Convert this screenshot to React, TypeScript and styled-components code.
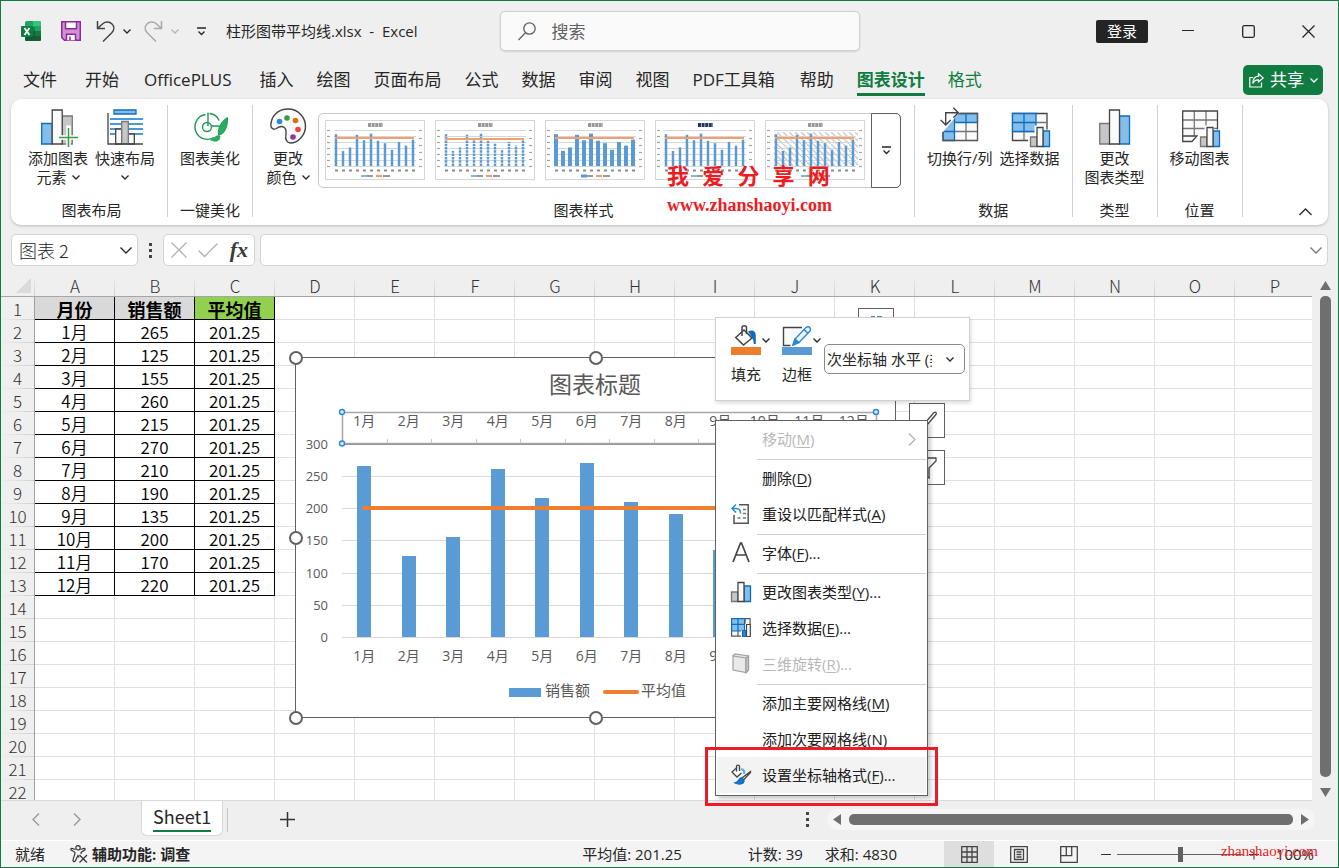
import React from "react";
import styled, { createGlobalStyle, css } from "styled-components";

const GREEN = "#107c41";
const INK = "#262626";
const UI = '"Open Sans", "Noto Sans CJK SC", sans-serif';
const CJK = '"Noto Sans CJK SC", sans-serif';

const Global = createGlobalStyle`
  *, *::before, *::after { box-sizing: border-box; }
  body { margin: 0; font-family: ${UI}; color: ${INK}; background: #efefef; }
  button, input, select { font: inherit; color: inherit; margin: 0; }
  button { background: none; border: 0; padding: 0; cursor: pointer; }
  svg { display: block; flex: none; overflow: visible; }
`;

const Window = styled.div`
  display: flex;
  flex-direction: column;
  height: 100vh;
  min-height: 600px;
  overflow: hidden;
  border: 1px solid ${GREEN};
  background: #efefef;
`;

/* ---------- title bar ---------- */

const TitleBar = styled.header`
  display: flex;
  align-items: center;
  height: 60px;
  flex: none;
`;

const TitleLeft = styled.div`
  flex: 1;
  display: flex;
  align-items: center;
  padding-left: 20px;
`;

const QuickButton = styled.button<{ $gap: number }>`
  display: flex;
  align-items: center;
  justify-content: center;
  margin-right: ${(p) => p.$gap}px;
`;

const FileName = styled.span`
  font-size: 15px;
  line-height: 20px;
  white-space: pre;
`;

const SearchBox = styled.label`
  display: flex;
  align-items: center;
  gap: 16px;
  width: 360px;
  height: 40px;
  padding-left: 17px;
  border: 1px solid #d0d0d0;
  border-radius: 5px;
  background: #fafafa;
  box-shadow: 0 1px 2px rgba(0, 0, 0, 0.12);
`;

const SearchInput = styled.input`
  flex: 1;
  min-width: 0;
  border: 0;
  outline: 0;
  padding: 0;
  background: transparent;
  font-size: 17px;
  &::placeholder {
    color: #616161;
    opacity: 1;
  }
`;

const TitleRight = styled.div`
  flex: 1;
  display: flex;
  align-items: center;
  justify-content: flex-end;
`;

const SignIn = styled.button`
  width: 52px;
  height: 23px;
  margin-right: 10px;
  border-radius: 2px;
  background: #242424;
  color: #fff;
  font-size: 15px;
  line-height: 23px;
`;

const CaptionButton = styled.button`
  width: 60px;
  height: 60px;
  display: flex;
  align-items: center;
  justify-content: center;
`;

/* ---------- ribbon tabs ---------- */

const TabRow = styled.nav`
  display: flex;
  align-items: center;
  height: 38px;
  flex: none;
  padding: 0 15px 0 22px;
`;

const Tab = styled.button<{ $tone?: "active" | "green"; $gap?: number }>`
  height: 32px;
  margin-right: ${(p) => p.$gap ?? 23}px;
  font-size: 17px;
  line-height: 32px;
  white-space: nowrap;
  ${(p) => p.$tone && css`color: ${GREEN};`}
  ${(p) =>
    p.$tone === "active" &&
    css`
      font-weight: 700;
      box-shadow: inset 0 -3px 0 ${GREEN};
    `}
`;

const ShareButton = styled.button`
  display: flex;
  align-items: center;
  gap: 6px;
  height: 30px;
  margin-left: auto;
  padding: 0 5px 0 6px;
  border-radius: 5px;
  background: ${GREEN};
  color: #fff;
  font-size: 17px;
  line-height: 30px;
  white-space: nowrap;
`;

/* ---------- ribbon ---------- */

const Ribbon = styled.section`
  position: relative;
  display: flex;
  flex: none;
  height: 126px;
  margin: 0 10px;
  padding: 6px 0 0 5px;
  border-radius: 10px;
  background: #fff;
  box-shadow: 0 1px 3px rgba(0, 0, 0, 0.22);
`;

const Group = styled.div`
  display: flex;
  flex-direction: column;
  justify-content: space-between;
  height: 114px;
`;

const Separator = styled.div`
  width: 1px;
  height: 112px;
  background: #d1d1d1;
`;

const GroupBody = styled.div<{ $wide?: boolean }>`
  display: flex;
  gap: ${(p) => (p.$wide ? 0 : 7)}px;
  padding: ${(p) => (p.$wide ? "0 13px 0 5px" : "0 12px")};
`;

const GroupLabel = styled.div`
  font-size: 15px;
  line-height: 18px;
  text-align: center;
`;

const BigButton = styled.button`
  display: flex;
  flex-direction: column;
  align-items: center;
  min-width: 60px;
  padding-top: 3px;
  font-size: 15px;
  line-height: 19px;
  white-space: nowrap;
`;

const BigIcon = styled.span`
  display: flex;
  height: 41px;
`;

const ButtonLine = styled.span`
  display: flex;
  align-items: center;
  gap: 5px;
  height: 19px;
`;

const Gallery = styled.div`
  display: flex;
  height: 75px;
  margin-top: 8px;
  border: 1px solid #c8c8c8;
  border-radius: 5px;
`;

const Thumbs = styled.div`
  display: flex;
  gap: 10px;
  height: 73px;
  padding: 6px 7px 0 6px;
`;

const ThumbButton = styled.button`
  display: block;
  height: 60px;
`;

const GalleryMore = styled.button`
  display: flex;
  align-items: center;
  justify-content: center;
  width: 30px;
  margin: -1px;
  border: 1px solid #616161;
  border-radius: 0 5px 5px 0;
`;

const Collapse = styled.button`
  margin: auto 16px 9px auto;
`;

const Stamp = styled.div`
  position: absolute;
  left: 656px;
  top: 64px;
  color: #ed1c24;
  font-weight: 700;
  white-space: nowrap;
  pointer-events: none;
`;

const StampName = styled.div`
  font-family: "Liberation Mono", ${CJK};
  font-size: 22px;
  line-height: 32px;
`;

const StampUrl = styled.div`
  font-family: "Liberation Serif", serif;
  font-size: 18px;
  line-height: 20px;
`;

/* ---------- formula bar ---------- */

const FormulaRow = styled.div`
  display: flex;
  align-items: center;
  flex: none;
  height: 50px;
  padding: 0 10px;
`;

const Field = styled.div`
  display: flex;
  align-items: center;
  height: 32px;
  border: 1px solid #d4d4d4;
  border-radius: 5px;
  background: #fff;
`;

const NameField = styled(Field)`
  width: 127px;
  padding: 0 5px 0 7px;
`;

const EditField = styled(Field)`
  width: 92px;
  justify-content: space-between;
  padding: 0 6px 0 7px;
`;

const FxLabel = styled.button`
  font-family: "Liberation Serif", serif;
  font-size: 22px;
  font-style: italic;
  font-weight: 700;
  line-height: 28px;
  color: #3b3b3b;
`;

const FormulaField = styled(Field)`
  flex: 1;
  margin-left: 5px;
  padding: 0 5px 0 8px;
`;

const PlainInput = styled.input`
  flex: 1;
  min-width: 0;
  height: 28px;
  padding: 0;
  border: 0;
  outline: 0;
  background: transparent;
  font-family: ${CJK};
  font-size: 18px;
  font-weight: 300;
`;

const Dots = styled.span`
  display: flex;
  flex-direction: column;
  gap: 3px;
  margin: 0 11px;
  i {
    width: 3px;
    height: 3px;
    background: #444;
  }
`;

/* ---------- sheet ---------- */

const SheetArea = styled.main`
  position: relative;
  display: flex;
  flex: 1;
  min-height: 0;
`;

const Viewport = styled.div`
  flex: 1;
  min-width: 0;
  overflow: hidden;
  background: #fff;
  border-bottom: 1px solid #d9d9d9;
`;

const Grid = styled.table`
  table-layout: fixed;
  width: 1314px;
  border-collapse: separate;
  border-spacing: 0;
  font-family: ${CJK};
  font-weight: 350;
  font-size: 17px;
  line-height: 22px;
  text-align: center;
  th, td { padding: 0; white-space: nowrap; }
  td { padding-top: 2px; line-height: 20px; }
`;

const ColHead = styled.th<{ $w: number }>`
  width: ${(p) => p.$w}px;
  height: 22px;
  font-weight: 300;
  line-height: 21px;
  color: #333;
  border-bottom: 1px solid #a6a6a6;
  background: linear-gradient(#efefef, #cfcfcf) right / 1px 100% no-repeat #efefef;
`;

const CornerIcon = styled.svg`
  margin-left: 15px;
`;

const RowHead = styled.th`
  height: 23px;
  font-weight: 300;
  font-size: 17px;
  color: #333;
  border-right: 1px solid #9f9f9f;
  background: linear-gradient(to right, #efefef, #cfcfcf) bottom / 100% 1px no-repeat #efefef;
`;

const Cell = styled.td<{ $ink?: boolean; $fill?: string }>`
  height: 23px;
  color: #000;
  border-right: 1px solid ${(p) => (p.$ink ? "#000" : "#e0e0e0")};
  border-bottom: 1px solid ${(p) => (p.$ink ? "#000" : "#e0e0e0")};
  ${(p) =>
    p.$fill &&
    css`
      background: ${p.$fill};
      font-weight: 700;
      font-size: 18px;
    `}
`;

const VScroll = styled.div`
  display: flex;
  flex-direction: column;
  align-items: center;
  gap: 5px;
  width: 26px;
  padding: 5px 0 3px;
`;

const Thumb = styled.div<{ $dir: "v" | "h" }>`
  flex: 1;
  border-radius: 5px;
  background: #6f6f6f;
  ${(p) => (p.$dir === "v" ? "width: 11px; margin-bottom: 5px;" : "height: 11px;")}
`;

const FloatingChart = styled.svg`
  position: absolute;
  left: 287px;
  top: 75px;
  font-family: ${UI};
  fill: #595959;
`;

const SideButton = styled.button<{ $x: number; $y: number }>`
  position: absolute;
  left: ${(p) => p.$x}px;
  top: ${(p) => p.$y}px;
  width: 36px;
  height: 35px;
  display: flex;
  align-items: center;
  justify-content: center;
  border: 1px solid #616161;
  background: #fff;
`;

const MiniBar = styled.div`
  position: absolute;
  left: 714px;
  top: 42px;
  display: flex;
  width: 255px;
  height: 84px;
  padding: 7px 4px 0 15px;
  border: 1px solid #d1d1d1;
  background: #fff;
  box-shadow: 1px 2px 4px rgba(0, 0, 0, 0.15);
`;

const MiniButton = styled.button`
  display: flex;
  flex-direction: column;
  gap: 9px;
  width: 51px;
  height: 62px;
  font-size: 15px;
  line-height: 20px;
  text-align: left;
`;

const MiniIconRow = styled.span`
  display: flex;
  align-items: center;
  gap: 1px;
`;

const ElementPicker = styled.div`
  position: relative;
  flex: none;
  width: 141px;
  height: 30px;
  margin: 19px 0 0 -9px;
  svg {
    position: absolute;
    right: 11px;
    top: 13px;
    pointer-events: none;
  }
`;

const Select = styled.select`
  appearance: none;
  width: 100%;
  height: 100%;
  padding: 0 32px 0 2px;
  border: 1px solid #8a8a8a;
  border-radius: 5px;
  background: #fff;
  font-size: 15px;
`;

const Menu = styled.div`
  position: absolute;
  left: 714px;
  top: 145px;
  width: 213px;
  padding: 0 1px 2px;
  border: 1px solid #616161;
  background: #fff;
  box-shadow: 3px 3px 4px rgba(0, 0, 0, 0.2);
`;

const MenuItem = styled.button<{ $off?: boolean; $hot?: boolean }>`
  display: flex;
  align-items: center;
  gap: 11px;
  width: 100%;
  height: 36px;
  padding: 0 10px 0 14px;
  font-size: 15px;
  line-height: 36px;
  white-space: nowrap;
  color: ${(p) => (p.$off ? "#b8b8b8" : "#202020")};
  background: ${(p) => (p.$hot ? "#f3f3f3" : "transparent")};
  u { text-underline-offset: 2px; }
`;

const MenuIcon = styled.span`
  width: 20px;
  height: 20px;
  flex: none;
`;

const SubArrow = styled.span`
  margin-left: auto;
`;

const MenuRule = styled.div`
  height: 1px;
  margin: 2px 0 0 40px;
  background: #cfcfcf;
`;

const Callout = styled.div`
  position: absolute;
  left: 704px;
  top: 472px;
  width: 233px;
  height: 59px;
  border: 3px solid #ed1c24;
  pointer-events: none;
`;

/* ---------- sheet tabs and status bar ---------- */

const SheetTabs = styled.div`
  display: flex;
  align-items: flex-start;
  flex: none;
  height: 39px;
  padding: 0 23px 0 31px;
`;

const TabsCell = styled.span<{ $right: number }>`
  display: flex;
  align-items: center;
  height: 36px;
  margin-right: ${(p) => p.$right}px;
`;

const SheetTab = styled.button`
  height: 36px;
  padding: 0 11px;
  margin-top: -1px;
  border: 1px solid #d9d9d9;
  border-top: 0;
  border-radius: 0 0 6px 6px;
  background: #fff;
`;

const SheetName = styled.span`
  display: block;
  height: 29px;
  border-bottom: 2px solid ${GREEN};
  font-family: ${CJK};
  font-size: 18px;
  line-height: 26px;
`;

const TabDivider = styled.span`
  width: 1px;
  height: 24px;
  margin: 7px 52px 0 4px;
  background: #c6c6c6;
`;

const HScroll = styled.div`
  display: flex;
  align-items: center;
  gap: 7px;
  width: 488px;
  height: 21px;
  margin-top: 8px;
  padding: 0 6px;
  border-radius: 10px;
  background: #f5f5f5;
`;

const Spacer = styled.span`
  flex: 1;
`;

const StatusBar = styled.footer`
  display: flex;
  align-items: center;
  flex: none;
  height: 27px;
  padding: 0 24px 0 14px;
  border-top: 1px solid #fff;
  background: #f4f4f4;
  font-size: 15px;
  line-height: 26px;
  white-space: nowrap;
`;

const StatusText = styled.span<{ $right: number }>`
  margin-right: ${(p) => p.$right}px;
`;

const AccessButton = styled.button`
  display: flex;
  align-items: center;
  gap: 4px;
  font-weight: 700;
`;

const ViewButton = styled.button<{ $on?: boolean }>`
  display: flex;
  align-items: center;
  justify-content: center;
  width: 50px;
  height: 26px;
  background: ${(p) => (p.$on ? "#dedede" : "transparent")};
`;

const ZoomSlider = styled.input`
  appearance: none;
  width: 126px;
  height: 16px;
  margin: 0 5px;
  background: linear-gradient(#616161, #616161) center / 100% 1px no-repeat;
  &::-webkit-slider-thumb {
    appearance: none;
    width: 5px;
    height: 15px;
    background: #616161;
  }
`;

const ZoomStep = styled.button`
  display: flex;
  align-items: center;
  justify-content: center;
  width: 12px;
  height: 20px;
`;

const ZoomGroup = styled.div`
  position: relative;
  display: flex;
  align-items: center;
  padding-left: 6px;
`;

const ZoomValue = styled.span`
  width: 54px;
  text-align: right;
`;

const StampSmall = styled.span`
  position: absolute;
  right: -4px;
  top: -3px;
  color: #ed1c24;
  font-family: "Liberation Serif", serif;
  font-size: 15px;
  line-height: 26px;
  pointer-events: none;
`;

/* ---------- icons ---------- */

const Chevron = ({ w = 8, color = INK, sw = 1.3 }: { w?: number; color?: string; sw?: number }) => (
  <svg width={w} height={w / 2 + 1} viewBox={`0 0 ${w} ${w / 2 + 1}`} fill="none" stroke={color} strokeWidth={sw}>
    <path d={`M.5 .5 L${w / 2} ${w / 2} L${w - 0.5} .5`} />
  </svg>
);

const ExcelIcon = () => (
  <svg width="20" height="20" viewBox="0 0 20 20">
    <rect x="4" y="0" width="16" height="20" rx="1.5" fill="#21a366" />
    <path d="M12 0h6.500a1.500 1.500 0 0 1 1.500 1.500V5h-8z" fill="#33c481" />
    <path d="M4 10h8v5H4z" fill="#107c41" />
    <path d="M12 10h8v5h-8z" fill="#107c41" />
    <path d="M4 15h16v3.500a1.500 1.500 0 0 1-1.500 1.500h-13A1.500 1.500 0 0 1 4 18.500z" fill="#185c37" />
    <path d="M5 6h9v11H5z" fill="#0b4f2a" opacity=".45" />
    <rect x="0" y="5" width="12" height="11" rx="1" fill="#107c41" />
    <path d="M3.500 7 8.500 14M8.500 7 3.500 14" stroke="#fff" strokeWidth="1.800" />
  </svg>
);

const SaveIcon = () => (
  <svg width="20" height="20" viewBox="0 0 20 20" fill="#d48fdc" stroke="#8a2b93" strokeWidth="1.500">
    <path d="M.75.75h18.500v18.500H3.500L.75 16.500z" />
    <path d="M4.500.75h11v7h-11z" fill="#fff" />
    <path d="M5.500 19.250v-6h9v6M9 19v-3.500" fill="#fff" />
  </svg>
);

const Undo = ({ flip }: { flip?: boolean }) => (
  <svg width="19" height="21" viewBox="0 0 19 21" fill="none" stroke={flip ? "#a8a8a8" : "#444"} strokeWidth="1.500">
    <path
      transform={flip ? "translate(19 0) scale(-1 1)" : undefined}
      d="M1.500 0V7.500H9M1.500 7.500 7 2.500c2.500-2 6.500-2 9 .5s2.300 6 0 8.500L7 20.500"
    />
  </svg>
);

const CustomizeIcon = () => (
  <svg width="9" height="9" viewBox="0 0 9 9" fill="none" stroke={INK} strokeWidth="1.300">
    <path d="M0 1h9M1.500 4.500 4.500 7.500 7.500 4.500" />
  </svg>
);

const Magnifier = () => (
  <svg width="18" height="19" viewBox="0 0 18 19" fill="none" stroke="#616161" strokeWidth="1.300">
    <circle cx="11.500" cy="6.500" r="5.700" />
    <path d="M7.500 10.800.5 18" />
  </svg>
);

const ShareIcon = () => (
  <svg width="15" height="15" viewBox="0 0 15 15" fill="none" stroke="#fff" strokeWidth="1.200">
    <path d="M4 4.500H.8V14h11.700V9.500" />
    <path d="M9.500.8 14.200 5 9.500 9V6.800C6.500 6.600 5 8 3.800 10.500 3.800 6.500 6 3.500 9.500 3.200z" />
  </svg>
);

const AddElementIcon = () => (
  <svg width="36" height="38" viewBox="0 0 36 38" strokeWidth="1.300">
    <path d="M1.700 15.500h10.500v20.500H1.700z" fill="#83beec" stroke="#0f6cbd" />
    <path d="M22.300 8h10v28h-10z" fill="#c8c6c4" stroke="#797775" />
    <path d="M12.200 2h10v34h-10z" fill="#fafafa" stroke="#444" />
    <path d="M28.500 17.500V39M17.500 29.500H39" stroke="#fff" strokeWidth="4.500" />
    <path d="M28.500 20v19M19 29.500h19" stroke="#2ea043" strokeWidth="1.500" />
  </svg>
);

const QuickLayoutIcon = () => (
  <svg width="36" height="38" viewBox="0 0 36 38" strokeWidth="1.300">
    <path d="M3 11h33M3 16h33M3 21h33M3 26h33" stroke="#0f78c8" />
    <path d="M7 2h22v4H7z" fill="#83beec" stroke="#0f6cbd" />
    <path d="M8.700 21h6v15h-6zM21.300 26h6v10h-6z" fill="#fafafa" stroke="#444" />
    <path d="M14.700 13.500h6.600V36h-6.600z" fill="#c8c6c4" stroke="#797775" />
    <path d="M1 5v31h35" fill="none" stroke="#444" />
  </svg>
);

const BeautifyIcon = () => (
  <svg width="34" height="34" viewBox="0 0 34 34" fill="none" stroke="#219653" strokeWidth="1.400">
    <path d="M12.500 6.500A12.500 12.500 0 1 0 21 29.500" />
    <path d="M15 4.500V18M18 18h8.500" />
    <path d="M16.500 5.500C21 6 24.500 8.500 26 12.500" />
    <circle cx="14" cy="19" r="4.500" />
    <path d="M34.500 9.500C28 13.500 24.500 20 25.500 27c5.500 0 9.500-8 9-17.500z" fill="#27ae60" strokeWidth="1" />
    <path d="M25 27.500c-3 0-4 4-7.500 4.500 4.500 2.500 10 1.500 9.500-4z" fill="#27ae60" strokeWidth=".5" />
  </svg>
);

const PaletteIcon = () => (
  <svg width="36" height="36" viewBox="0 0 36 36">
    <path
      d="M18 1C8 1 1 8 .8 17.500c0 3 3 4.500 5.500 3 3-2 6-2.500 8-1 2.500 2 2 4.500 1.500 8-.6 4 1 7 4.500 7.500C28 35 35.500 27 35.500 18.500 35.500 9 28 1 18 1z"
      fill="#fafafa"
      stroke="#444"
      strokeWidth="1.400"
    />
    <circle cx="9.500" cy="13.500" r="2.800" fill="#2b88d8" />
    <circle cx="17" cy="10" r="2.800" fill="#3c9a40" />
    <circle cx="25.500" cy="12.500" r="2.800" fill="#e07000" />
    <circle cx="28" cy="21.500" r="2.800" fill="#f04040" />
    <circle cx="23" cy="29" r="2.800" fill="#8e35a0" />
  </svg>
);

const MiniBars = () => (
  <g strokeWidth="1.300">
    <path d="M.5 10H7v9.500H.5z" fill="#c8c6c4" stroke="#797775" />
    <path d="M13 4h6.500v15.500H13z" fill="#83beec" stroke="#0f6cbd" />
    <path d="M7 .5h6v19H7z" fill="#fafafa" stroke="#444" />
  </g>
);

const SwitchIcon = () => (
  <svg width="38" height="36" viewBox="0 0 38 36" fill="none" strokeWidth="1.300">
    <path d="M2 5.500h34.500v27H2z" fill="#fafafa" />
    <path d="M2 5.500h34.500v9H13.500v18H2z" fill="#83beec" />
    <path d="M13.500 23.500h23M25 14.500v18" stroke="#797775" />
    <path d="M13.500 5.500h23v9h-23zM2 14.500v18h11.500v-18M25 5.500v9M2 23.500h11.500" stroke="#0f6cbd" />
    <path d="M2 5.500h34.500v27H2z" stroke="#555" />
    <path d="M-2-2h26L2 24h-4z" fill="#fff" />
    <path d="M4.700 17V4.700h12.600M-.3 12l5 5 5-5M12.300-.3l5 5-5 5" stroke="#444" strokeWidth="1.400" />
  </svg>
);

const SelectDataIcon = () => (
  <svg width="38" height="36" viewBox="0 0 38 36" fill="none" strokeWidth="1.300">
    <path d="M1.500 5.500h34.500v27H1.500z" fill="#fafafa" stroke="#444" />
    <path d="M13 23.500v9M1.500 23.500H36M25 14.500h11" stroke="#797775" />
    <path d="M1.500 5.500H25v18H1.500z" fill="#83beec" stroke="#0f6cbd" />
    <path d="M13 5.500v18M1.500 14.500H25" stroke="#0f6cbd" />
    <path d="M17 27h6.500v-9.500H33v4h6V40H17z" fill="#fff" />
    <g transform="translate(19 19)">
      <MiniBars />
    </g>
  </svg>
);

const BarsIcon = () => (
  <svg width="31" height="37" viewBox="0 0 31 37" strokeWidth="1.300">
    <path d="M.7 15.500h10V36H.7z" fill="#c8c6c4" stroke="#797775" />
    <path d="M20.500 8h10v28h-10z" fill="#83beec" stroke="#0f6cbd" />
    <path d="M10.500 2h10v34h-10z" fill="#fafafa" stroke="#444" />
  </svg>
);

const MoveChartIcon = () => (
  <svg width="38" height="38" viewBox="0 0 38 38" fill="none" strokeWidth="1.300">
    <path d="M1.700 3h34.800v25H16l-5 5.500H1.700z" fill="#fafafa" />
    <path d="M13.300 3v25M25 3v25M1.700 12h34.800M1.700 20.500h34.800" stroke="#797775" />
    <path d="M36.500 28V3H1.700v30.500H11l5-5.500H1.700" stroke="#444" />
    <path d="M17 27h6.500v-9.500H33v4h6V40H17z" fill="#fff" />
    <g transform="translate(19 19)">
      <MiniBars />
    </g>
  </svg>
);

const FillIcon = () => (
  <svg width="30" height="30" viewBox="0 0 30 30" fill="none" strokeWidth="1.500">
    <path d="M4.700 12.500 13 5l8 8-8.500 7z" fill="#fafafa" stroke="#444" />
    <path d="M11 11V2.500C11 0 15.500 0 15.500 2.500V9" stroke="#444" />
    <path d="M17 6.500c4.500-2.500 7.500-.5 7.800 3.500v9h-2C22.500 14 21 12 17 6.500z" fill="#0f6cbd" />
    <rect x="0" y="22" width="30" height="8" fill="#ed7d31" />
  </svg>
);

const OutlineIcon = () => (
  <svg width="30" height="30" viewBox="0 0 30 30" fill="none" strokeWidth="1.400">
    <path d="M20 2.500H1.500v18h7" fill="#fafafa" stroke="#444" />
    <path d="M11 20l2-6L24 2.500c3-2 5.500.5 4 3.500L17 17.500z" fill="#e9f4fc" stroke="#2b88d8" />
    <path d="M13 14l4 3.500-6 2.500zM22 4.500l4 4" fill="#2b88d8" stroke="#2b88d8" />
    <rect x="0" y="22" width="30" height="8" fill="#5b9bd5" />
  </svg>
);

const ResetIcon = () => (
  <svg width="20" height="20" viewBox="0 0 20 20" fill="none">
    <path d="M8 .8h9.200v18.400H3V11" stroke="#555" strokeWidth="1.500" />
    <path d="M12 5.500h3M12 9.500h3M6.500 14h3M12 14h3" stroke="#777" strokeWidth="1.500" />
    <path d="M5 .5 1 4.500l4 4M1 4.500h4c3.500 0 4.500 2 4.500 5" stroke="#2b88d8" strokeWidth="1.500" />
  </svg>
);

const FontIcon = () => (
  <svg width="20" height="20" viewBox="0 0 20 20" fill="none" stroke="#444" strokeWidth="1.700">
    <path d="M2 19 9.500 0h1L18 19M5 12h10" />
  </svg>
);

const MenuBarsIcon = () => (
  <svg width="20" height="20" viewBox="0 0 20 20">
    <MiniBars />
  </svg>
);

const MenuDataIcon = () => (
  <svg width="20" height="20" viewBox="0 0 20 20" fill="none" strokeWidth="1.200">
    <path d="M.6.6h18.500v17.500H.6z" fill="#fafafa" stroke="#555" />
    <path d="M.6.6h13v12.400H.6z" fill="#83beec" stroke="#0f6cbd" />
    <path d="M7 .6v12.400M.6 6.300h13" stroke="#0f6cbd" />
    <path d="M7 13v5M14 .6v5" stroke="#555" />
    <path d="M10 19.500v-7h4V6h6v13.500z" fill="#fff" />
    <path d="M11.500 12.500H15V18.500h-3.500z" fill="#2b88d8" stroke="#0f6cbd" />
    <path d="M15.500 6.500h3.800v12h-3.800z" fill="#fafafa" stroke="#444" />
  </svg>
);

const RotateIcon = () => (
  <svg width="20" height="20" viewBox="0 0 20 20" fill="#e9e9e9" stroke="#a0a0a0" strokeWidth="1.200">
    <path d="M2 2 4 0l13.500 2v14l-2.500 2.500" />
    <path d="M2 2l13 2v14.500L2 16z" />
    <path d="M15 4l2.500-2v14L15 18.500z" fill="#c8c8c8" />
  </svg>
);

const FormatIcon = () => (
  <svg width="20" height="20" viewBox="0 0 20 20" fill="none" strokeWidth="1.300">
    <path d="M10.500 8 6 12 1 7 6 2.500" stroke="#444" fill="#fafafa" />
    <path d="M5.500 6.500V1.500c0-1.800 3-1.800 3 0v4.500" stroke="#444" />
    <path d="M10 4.500c2.500-.5 3.500 1.500 3.200 4.500" stroke="#5ab0e8" strokeWidth="2.200" />
    <path d="M19.500 6.500 11 13l1.500 2L19.500 7.500z" stroke="#444" fill="#fafafa" />
    <path d="M10.500 13c-3 0-2.500 4-6.500 5 3.500 1.800 9 1.500 9-2.500z" fill="#0f78d4" stroke="#0f6cbd" />
  </svg>
);

const AccessIcon = () => (
  <svg width="18" height="18" viewBox="0 0 18 18" fill="none" stroke="#333" strokeWidth="1.200">
    <circle cx="8" cy="2.800" r="2.200" />
    <path d="M5.500 4.500C3.500 4 1 2.500.8 4.200.6 5.800 4.500 6 5 7.500c.3 2-2.200 6-2 8 .3 2 2.200 1 2.800-.5L8 10.500l1.200 2M10.500 4.500c2-.5 4.500-2 4.700-.3.200 1.600-3.700 2-4.200 3.300l.2 1.500" />
    <path d="M9.500 10l7.500 7.500M17 10l-7.500 7.500" />
  </svg>
);

const Triangle = ({ dir }: { dir: "up" | "down" | "left" | "right" }) => {
  const d = {
    up: "M5.500 1 11 10H0z",
    down: "M0 1h11L5.500 10z",
    left: "M0 5.500 8 0v11z",
    right: "M9 5.500 1 0v11z",
  }[dir];
  const w = dir === "left" || dir === "right" ? 9 : 11;
  return (
    <svg width={w} height="11" viewBox={`0 0 ${w} 11`}>
      <path d={d} fill="#6f6f6f" />
    </svg>
  );
};

/* ---------- data ---------- */

const SALES = [265, 125, 155, 260, 215, 270, 210, 190, 135, 200, 170, 220];
const AVG = 201.25;
const COLS = "ABCDEFGHIJKLMNOP".split("");
const ROWS = Array.from({ length: 22 }, (_, i) => i + 1);
const FILLS = ["#d9d9d9", "#d9d9d9", "#92d050"];

const cellText = (row: number, col: number): string => {
  if (row === 1) return ["月份", "销售额", "平均值"][col] ?? "";
  if (row > 13) return "";
  return [`${row - 1}月`, String(SALES[row - 2]), AVG.toFixed(2)][col] ?? "";
};

const ThumbChart = ({ kind }: { kind: number }) => {
  const barW = [2.5, 2.5, 4, 2.5, 2.5][kind];
  const lineY = kind === 1 ? 19 : 18;
  return (
    <svg width="100" height="60" viewBox="0 0 100 60">
      <defs>
        <pattern id="hatch" width="6" height="6" patternUnits="userSpaceOnUse">
          <path d="M0 0l6 6" stroke="#cdcdcd" strokeWidth="1.500" />
        </pattern>
      </defs>
      <rect x=".5" y=".5" width="99" height="59" fill="#fff" stroke="#d6d6d6" />
      {kind === 4 && <rect x="9" y="12" width="84" height="35" fill="url(#hatch)" />}
      {[10, 16, 22, 28, 34, 40, 46].map((y) => (
        <path key={y} d={`M9 ${y}.5h82`} stroke="#d3d6dc" />
      ))}
      {[10, 16, 22, 28, 34, 40, 46].map((y) => (
        <path key={y} d={`M2 ${y}.500h3`} stroke="#a5a5a5" strokeWidth="1.200" />
      ))}
      {[10, 18, 25, 32, 39, 46].map((y) => (
        <path key={y} d={`M94 ${y}.500h3`} stroke="#a5a5a5" strokeWidth="1.200" />
      ))}
      {SALES.map((v, i) => (
        <path
          key={i}
          d={`M${11 + i * 7} 46v${-v * 0.12}`}
          stroke="#5b9bd5"
          strokeWidth={barW}
          strokeDasharray={kind === 1 ? "2.500 .8" : undefined}
        />
      ))}
      <path d={`M10 ${lineY}h79`} stroke="#f2a16e" strokeWidth="2.200" />
      <path d="M10 50.500h80" stroke="#8c8c8c" strokeWidth="2" strokeDasharray="3 4" />
      <path d="M43 5h15" stroke={kind === 3 ? "#1f3864" : "#999"} strokeWidth="4" strokeDasharray="3 .6" />
      <path d="M36 56h6" stroke="#5b9bd5" strokeWidth={kind === 2 ? 3 : 1.5} />
      <path d="M51 56h6" stroke="#ed7d31" strokeWidth="1.500" />
      <path d="M42 56h6M58 56h7" stroke="#999" strokeWidth="2" />
    </svg>
  );
};

const CHART = { left: 342, base: 637, unit: 0.645, step: 44.5 };

const Chart = () => (
  <FloatingChart width="616" height="376" viewBox="288 350 616 376" role="img" aria-label="图表标题">
    <rect x="295.500" y="357.500" width="600" height="360" fill="#fff" stroke="#616161" />
    <text x="595" y="393" fontSize="23" textAnchor="middle">图表标题</text>
    {[0, 50, 100, 150, 200, 250, 300].map((v) => {
      const y = Math.round(CHART.base - v * CHART.unit) + 0.5;
      return (
        <g key={v}>
          <path d={`M${CHART.left} ${y}h534`} stroke={v === 300 ? "#8f8f8f" : "#d9d9d9"} />
          <text x="328" y={y + 4} fontSize="13" textAnchor="end">{v}</text>
        </g>
      );
    })}
    <path d="M342.500 412.500h534v31h-534z" fill="none" stroke="#a6a6a6" strokeWidth="1.500" />
    {SALES.map((v, i) => {
      const x = CHART.left + CHART.step * (i + 0.5);
      const h = Math.round(v * CHART.unit);
      return (
        <g key={i}>
          {i > 0 && <path d={`M${Math.round(x - CHART.step / 2)}.500 439v4`} stroke="#c8c8c8" />}
          <rect x={Math.round(x) - 7} y={CHART.base - h} width="14" height={h} fill="#5b9bd5" />
          <text x={x} y="426" fontSize="14" textAnchor="middle">{`${i + 1}月`}</text>
          <text x={x} y="661" fontSize="14" textAnchor="middle">{`${i + 1}月`}</text>
        </g>
      );
    })}
    <path d="M364 508h490" stroke="#ed7d31" strokeWidth="4" strokeLinecap="round" />
    <rect x="509" y="688" width="32" height="9" fill="#5b9bd5" />
    <text x="545" y="696" fontSize="15">销售额</text>
    <path d="M605 692h32" stroke="#ed7d31" strokeWidth="4" strokeLinecap="round" />
    <text x="641" y="696" fontSize="15">平均值</text>
    {[[342, 412], [342, 443.5], [876, 412], [876, 443.5]].map(([x, y]) => (
      <circle key={`${x}-${y}`} cx={x} cy={y} r="2.500" fill="#d8ecfb" stroke="#2b88d8" strokeWidth="1.400" />
    ))}
    {[[296, 358], [596, 358], [296, 538], [296, 718], [596, 718]].map(([x, y]) => (
      <circle key={`${x}-${y}`} cx={x} cy={y} r="6" fill="#fff" stroke="#616161" strokeWidth="2" />
    ))}
  </FloatingChart>
);

type Entry = { text: string; mark: string; tail?: string; icon?: React.ReactNode; off?: boolean; hot?: boolean; sub?: boolean; rule?: boolean };

const ENTRIES: Entry[] = [
  { text: "移动", mark: "M", off: true, sub: true, rule: true },
  { text: "删除", mark: "D" },
  { text: "重设以匹配样式", mark: "A", icon: <ResetIcon />, rule: true },
  { text: "字体", mark: "F", tail: "...", icon: <FontIcon />, rule: true },
  { text: "更改图表类型", mark: "Y", tail: "...", icon: <MenuBarsIcon /> },
  { text: "选择数据", mark: "E", tail: "...", icon: <MenuDataIcon /> },
  { text: "三维旋转", mark: "R", tail: "...", icon: <RotateIcon />, off: true, rule: true },
  { text: "添加主要网格线", mark: "M" },
  { text: "添加次要网格线", mark: "N" },
  { text: "设置坐标轴格式", mark: "F", tail: "...", icon: <FormatIcon />, hot: true },
];

const TABS: { name: string; tone?: "active" | "green"; gap?: number }[] = [
  { name: "文件", gap: 28 },
  { name: "开始", gap: 25 },
  { name: "OfficePLUS", gap: 28 },
  { name: "插入" },
  { name: "绘图" },
  { name: "页面布局" },
  { name: "公式" },
  { name: "数据" },
  { name: "审阅" },
  { name: "视图" },
  { name: "PDF工具箱", gap: 25 },
  { name: "帮助" },
  { name: "图表设计", tone: "active" },
  { name: "格式", tone: "green" },
];

const Big = ({ icon, lines, drop }: { icon: React.ReactNode; lines: string[]; drop?: boolean }) => (
  <BigButton>
    <BigIcon>{icon}</BigIcon>
    {lines.map((line, i) => (
      <ButtonLine key={i}>
        {line}
        {drop && i === lines.length - 1 && <Chevron />}
      </ButtonLine>
    ))}
  </BigButton>
);

export default function App() {
  return (
    <Window>
      <Global />
      <TitleBar>
        <TitleLeft>
          <QuickButton $gap={20} aria-label="Excel"><ExcelIcon /></QuickButton>
          <QuickButton $gap={15} aria-label="保存"><SaveIcon /></QuickButton>
          <QuickButton $gap={8} aria-label="撤消"><Undo /></QuickButton>
          <QuickButton $gap={13} aria-label="撤消列表"><Chevron /></QuickButton>
          <QuickButton $gap={8} aria-label="恢复"><Undo flip /></QuickButton>
          <QuickButton $gap={18} aria-label="恢复列表"><Chevron color="#b5b5b5" /></QuickButton>
          <QuickButton $gap={20} aria-label="自定义快速访问工具栏"><CustomizeIcon /></QuickButton>
          <FileName>{"柱形图带平均线.xlsx  -  Excel"}</FileName>
        </TitleLeft>
        <SearchBox>
          <Magnifier />
          <SearchInput placeholder="搜索" aria-label="搜索" />
        </SearchBox>
        <TitleRight>
          <SignIn>登录</SignIn>
          <CaptionButton aria-label="最小化">
            <svg width="12" height="12" viewBox="0 0 12 12"><path d="M0 5.500h12" stroke={INK} /></svg>
          </CaptionButton>
          <CaptionButton aria-label="最大化">
            <svg width="13" height="13" viewBox="0 0 13 13"><rect x=".7" y=".7" width="11.600" height="11.600" rx="1.500" fill="none" stroke={INK} strokeWidth="1.300" /></svg>
          </CaptionButton>
          <CaptionButton aria-label="关闭">
            <svg width="13" height="13" viewBox="0 0 13 13"><path d="M.5.5l12 12M12.500.5l-12 12" stroke={INK} strokeWidth="1.300" /></svg>
          </CaptionButton>
        </TitleRight>
      </TitleBar>

      <TabRow>
        {TABS.map((t) => (
          <Tab key={t.name} $tone={t.tone} $gap={t.gap}>{t.name}</Tab>
        ))}
        <ShareButton>
          <ShareIcon />
          共享
          <Chevron color="#fff" />
        </ShareButton>
      </TabRow>

      <Ribbon>
        <Group>
          <GroupBody>
            <Big icon={<AddElementIcon />} lines={["添加图表", "元素"]} drop />
            <Big icon={<QuickLayoutIcon />} lines={["快速布局", ""]} drop />
          </GroupBody>
          <GroupLabel>图表布局</GroupLabel>
        </Group>
        <Separator />
        <Group>
          <GroupBody>
            <Big icon={<BeautifyIcon />} lines={["图表美化"]} />
          </GroupBody>
          <GroupLabel>一键美化</GroupLabel>
        </Group>
        <Separator />
        <Group>
          <GroupBody $wide>
            <Big icon={<PaletteIcon />} lines={["更改", "颜色"]} drop />
            <Gallery>
              <Thumbs>
                {[0, 1, 2, 3, 4].map((k) => (
                  <ThumbButton key={k} aria-label={`样式 ${k + 1}`}><ThumbChart kind={k} /></ThumbButton>
                ))}
              </Thumbs>
              <GalleryMore aria-label="其他样式"><CustomizeIcon /></GalleryMore>
            </Gallery>
          </GroupBody>
          <GroupLabel>图表样式</GroupLabel>
        </Group>
        <Separator />
        <Group>
          <GroupBody>
            <Big icon={<SwitchIcon />} lines={["切换行/列"]} />
            <Big icon={<SelectDataIcon />} lines={["选择数据"]} />
          </GroupBody>
          <GroupLabel>数据</GroupLabel>
        </Group>
        <Separator />
        <Group>
          <GroupBody>
            <Big icon={<BarsIcon />} lines={["更改", "图表类型"]} />
          </GroupBody>
          <GroupLabel>类型</GroupLabel>
        </Group>
        <Separator />
        <Group>
          <GroupBody>
            <Big icon={<MoveChartIcon />} lines={["移动图表"]} />
          </GroupBody>
          <GroupLabel>位置</GroupLabel>
        </Group>
        <Separator />
        <Collapse aria-label="折叠功能区">
          <svg width="13" height="8" viewBox="0 0 13 8"><path d="M.5 7l6-6 6 6" fill="none" stroke={INK} strokeWidth="1.300" /></svg>
        </Collapse>
        <Stamp>
          <StampName>我 爱 分 享 网</StampName>
          <StampUrl>www.zhanshaoyi.com</StampUrl>
        </Stamp>
      </Ribbon>

      <FormulaRow>
        <NameField>
          <PlainInput defaultValue="图表 2" aria-label="名称框" />
          <Chevron w={12} />
        </NameField>
        <Dots><i /><i /><i /></Dots>
        <EditField>
          <svg width="16" height="16" viewBox="0 0 16 16"><path d="M.5.5l15 15M15.500.5l-15 15" stroke="#b0b0b0" strokeWidth="1.300" /></svg>
          <svg width="20" height="14" viewBox="0 0 20 14"><path d="M.5 7.500l6 6L19.500.5" fill="none" stroke="#b0b0b0" strokeWidth="1.300" /></svg>
          <FxLabel>fx</FxLabel>
        </EditField>
        <FormulaField>
          <PlainInput aria-label="编辑栏" />
          <Chevron w={12} color="#777" />
        </FormulaField>
      </FormulaRow>

      <SheetArea>
        <Viewport>
          <Grid>
            <thead>
              <tr>
                <ColHead $w={34}>
                  <CornerIcon width="15" height="15" viewBox="0 0 15 15"><path d="M15 0v15H0z" fill="#dadada" /></CornerIcon>
                </ColHead>
                {COLS.map((c) => (
                  <ColHead key={c} $w={80}>{c}</ColHead>
                ))}
              </tr>
            </thead>
            <tbody>
              {ROWS.map((r) => (
                <tr key={r}>
                  <RowHead>{r}</RowHead>
                  {COLS.map((c, i) => (
                    <Cell key={c} $ink={r <= 13 && i < 3} $fill={r === 1 ? FILLS[i] : undefined}>{cellText(r, i)}</Cell>
                  ))}
                </tr>
              ))}
            </tbody>
          </Grid>
        </Viewport>
        <VScroll>
          <Triangle dir="up" />
          <Thumb $dir="v" />
          <Triangle dir="down" />
        </VScroll>

        <Chart />
        <SideButton $x={857} $y={33} aria-label="图表元素">
          <svg width="22" height="22" viewBox="0 0 22 22"><path d="M6 2h4M12 2h5" stroke="#0f6cbd" strokeWidth="1.500" /></svg>
        </SideButton>
        <SideButton $x={908} $y={128} aria-label="图表样式">
          <svg width="20" height="20" viewBox="0 0 20 20" fill="none" stroke="#444" strokeWidth="1.300"><path d="M8 12 17 1.500c1.500-1 3 .5 2 2L10 14zM8 12c-3 0-3 4-6 5 4 2 8 0 8-3" /></svg>
        </SideButton>
        <SideButton $x={908} $y={175} aria-label="图表筛选器">
          <svg width="20" height="20" viewBox="0 0 20 20" fill="none" stroke="#444" strokeWidth="1.300"><path d="M1 0h18v3l-7 7v10l-4-3v-7L1 3z" /></svg>
        </SideButton>

        <MiniBar>
          <MiniButton>
            <MiniIconRow><FillIcon /><Chevron /></MiniIconRow>
            填充
          </MiniButton>
          <MiniButton>
            <MiniIconRow><OutlineIcon /><Chevron /></MiniIconRow>
            边框
          </MiniButton>
          <ElementPicker>
            <Select aria-label="图表元素" defaultValue="x2">
              <option value="x2">次坐标轴 水平 (类别)轴</option>
            </Select>
            <Chevron />
          </ElementPicker>
        </MiniBar>

        <Menu role="menu">
          {ENTRIES.map((e) => (
            <React.Fragment key={e.text}>
              <MenuItem role="menuitem" $off={e.off} $hot={e.hot}>
                <MenuIcon>{e.icon}</MenuIcon>
                <span>{e.text}(<u>{e.mark}</u>){e.tail}</span>
                {e.sub && (
                  <SubArrow>
                    <svg width="8" height="13" viewBox="0 0 8 13"><path d="M1 .5l6 6-6 6" fill="none" stroke="#b0b0b0" strokeWidth="1.200" /></svg>
                  </SubArrow>
                )}
              </MenuItem>
              {e.rule && <MenuRule />}
            </React.Fragment>
          ))}
        </Menu>
        <Callout />
      </SheetArea>

      <SheetTabs>
        <TabsCell $right={33}>
          <svg width="8" height="13" viewBox="0 0 8 13"><path d="M7 .5l-6 6 6 6" fill="none" stroke="#9a9a9a" strokeWidth="1.400" /></svg>
        </TabsCell>
        <TabsCell $right={60}>
          <svg width="8" height="13" viewBox="0 0 8 13"><path d="M1 .5l6 6-6 6" fill="none" stroke="#9a9a9a" strokeWidth="1.400" /></svg>
        </TabsCell>
        <SheetTab><SheetName>Sheet1</SheetName></SheetTab>
        <TabDivider />
        <TabsCell $right={0}>
          <svg width="15" height="15" viewBox="0 0 15 15"><path d="M0 7.500h15M7.500 0v15" stroke="#333" strokeWidth="1.500" /></svg>
        </TabsCell>
        <Spacer />
        <TabsCell $right={7}><Dots><i /><i /><i /></Dots></TabsCell>
        <HScroll>
          <Triangle dir="left" />
          <Thumb $dir="h" />
          <Triangle dir="right" />
        </HScroll>
      </SheetTabs>

      <StatusBar>
        <StatusText $right={25}>就绪</StatusText>
        <AccessButton><AccessIcon />辅助功能: 调查</AccessButton>
        <Spacer />
        <StatusText $right={66}>平均值: 201.25</StatusText>
        <StatusText $right={22}>计数: 39</StatusText>
        <StatusText $right={47}>求和: 4830</StatusText>
        <ViewButton $on aria-label="普通">
          <svg width="17" height="17" viewBox="0 0 17 17" fill="none" stroke="#444" strokeWidth="1.300"><path d="M.7.7h15.600v15.600H.7zM6 .7v15.600M11 .7v15.600M.7 6h15.600M.7 11h15.600" /></svg>
        </ViewButton>
        <ViewButton aria-label="页面布局">
          <svg width="18" height="17" viewBox="0 0 18 17" fill="none" stroke="#444" strokeWidth="1.300"><path d="M.7.7h16.600v15.600H.7zM4.500 3.500h9v10h-9zM6.500 6h5M6.500 8.500h5M6.500 11h5" /></svg>
        </ViewButton>
        <ViewButton aria-label="分页预览">
          <svg width="18" height="17" viewBox="0 0 18 17" fill="none" stroke="#444" strokeWidth="1.300"><path d="M.7.7h16.600v15.600H.7zM6.300.7v9M11.700.7v9H.7" /></svg>
        </ViewButton>
        <ZoomGroup>
          <ZoomStep aria-label="缩小"><svg width="10" height="10" viewBox="0 0 10 10"><path d="M0 5.500h10" stroke="#333" /></svg></ZoomStep>
          <ZoomSlider type="range" min="0" max="100" defaultValue="50" aria-label="缩放" />
          <ZoomStep aria-label="放大"><svg width="10" height="10" viewBox="0 0 10 10"><path d="M0 5.500h10M5 .5v10" stroke="#333" /></svg></ZoomStep>
          <ZoomValue>100%</ZoomValue>
          <StampSmall>zhanshaoyi.com</StampSmall>
        </ZoomGroup>
      </StatusBar>
    </Window>
  );
}
